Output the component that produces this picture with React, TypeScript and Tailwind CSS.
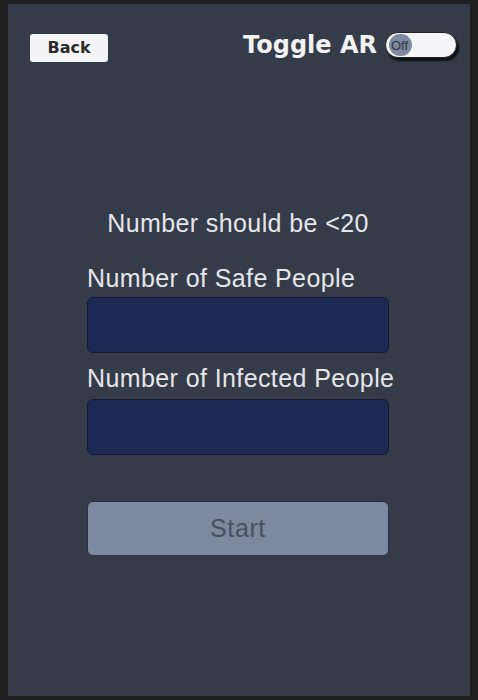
import React from "react";

const App: React.FC = () => {
  return (
    <div className="w-[478px] h-[700px] bg-[#202020] pt-[4px] pl-[8px] pr-[8px] pb-[4px] overflow-hidden">
      <div
        className="h-full w-[462px] bg-[#363b4a] flex flex-col"
        style={{ fontFamily: '"Liberation Sans", Arial, sans-serif' }}
      >
        {/* top bar */}
        <div className="flex items-start justify-between pt-[28px] pl-[22px] pr-[13px] h-[58px] box-content">
          <button className="mt-[2px] w-[78px] h-[28px] bg-[#f4f4f6] rounded-[3px] text-[#2a2a2a] text-[16px] font-bold leading-none font-['DejaVu_Sans',sans-serif]">
            Back
          </button>
          <div className="flex items-center gap-[8px]">
            <span className="text-[#f2f2f2] text-[24px] font-bold font-['DejaVu_Sans',sans-serif] leading-none">
              Toggle AR
            </span>
            <div className="relative w-[72px] h-[26px] rounded-full bg-[#f5f5f8] shadow-[2px_3px_2px_rgba(0,0,0,0.7)] border border-[#222]">
              <div className="absolute left-[3px] top-[1px] w-[23px] h-[22px] rounded-full bg-[#7d8aa2] flex items-center">
                <span className="text-[#2e3340] text-[13px] leading-none ml-[2px]">Off</span>
              </div>
            </div>
          </div>
        </div>

        {/* form */}
        <div className="-mt-[28px] pt-[149px] pl-[79px] pr-[81px] flex flex-col">
          <p className="text-center text-[#e6e6ea] text-[25px] tracking-[0.4px] leading-none whitespace-nowrap">Number should be &lt;20</p>
          <p className="mt-[30px] text-[#e6e6ea] text-[25px] tracking-[0.4px] leading-none whitespace-nowrap">Number of Safe People</p>
          <div className="mt-[6px] h-[56px] bg-[#1b2954] border border-[#141a2c] rounded-[6px]" />
          <p className="mt-[13px] text-[#e6e6ea] text-[25px] tracking-[0.4px] leading-none whitespace-nowrap">Number of Infected People</p>
          <div className="mt-[8px] h-[56px] bg-[#1b2954] border border-[#141a2c] rounded-[6px]" />
          <button className="mt-[46px] h-[55px] bg-[#7d89a0] border border-[#2c3140] rounded-[6px] text-[#485063] text-[25px] tracking-[0.6px]">
            Start
          </button>
        </div>
      </div>
    </div>
  );
};

export default App;
